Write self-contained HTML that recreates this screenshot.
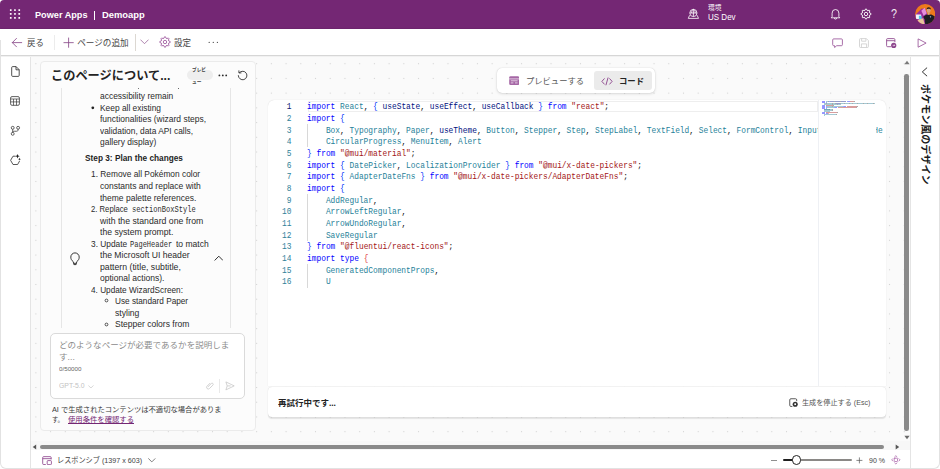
<!DOCTYPE html>
<html lang="ja">
<head>
<meta charset="utf-8">
<title>Power Apps | Demoapp</title>
<style>
*{box-sizing:border-box;margin:0;padding:0}
html,body{width:940px;height:469px;overflow:hidden;background:#fff}
body{font-family:"Liberation Sans","Noto Sans CJK JP",sans-serif;color:#242424;position:relative;font-size:9px}
.abs,.t,svg.ic{position:absolute}
.t{white-space:nowrap;transform-origin:0 50%;overflow:visible}
i{font-style:normal}
#hdr{left:0;top:0;width:940px;height:28.5px;background:#742774;border-radius:4px 4px 0 0}
#tb{left:0;top:28.500px;width:940px;height:27.600px;background:#fff;border-bottom:1px solid #d6d6d6;box-shadow:0 0 1.500px rgba(0,0,0,.22)}
.sep{position:absolute;width:1px;background:#d6d6d6}
#main{left:30.500px;top:56.500px;width:879.500px;height:395px;background-color:#fafafa;
 background-image:radial-gradient(circle,#d2d2d2 0.55px,rgba(210,210,210,0) 1px);background-size:14.730px 14.730px;background-position:-2.500px -0.670px}
#rail{left:0;top:56.5px;width:30.5px;height:412.5px;background:#fff;border-right:1px solid #e4e4e4;border-radius:0 0 0 5px}
#rrail{left:909.600px;top:56.500px;width:30.400px;height:412.5px;background:#fff;border-left:1px solid #e4e4e4}
#chat{left:39.800px;top:60.700px;width:216.400px;height:370.800px;background:#fcfcfc;border-radius:4px;border:1px solid #ebebeb}
#msg{left:60.500px;top:88px;width:170px;height:240px;background:transparent;border-left:1px solid #e6e6e6;border-right:1px solid #e6e6e6}
#inp{left:50.3px;top:333.3px;width:194.4px;height:65.4px;background:#fff;border:1px solid #dadada;border-radius:5px}
#badge{left:186.800px;top:70.200px;width:26.200px;height:9.600px;border-radius:5px;background:#eeeeee}
#tog{left:497.4px;top:68.3px;width:157.8px;height:25px;background:#fff;border-radius:5px;box-shadow:0 0 1px rgba(0,0,0,.2),0 1px 3px rgba(0,0,0,.12)}
#togsel{left:593.8px;top:71px;width:58.5px;height:19px;background:#ebebeb;border-radius:3px}
#code{left:267.8px;top:100.3px;width:617.8px;height:286px;background:#fff;border-radius:6px 6px 0 0;box-shadow:0 0 1px rgba(0,0,0,.18);overflow:hidden}
#codein{position:absolute;left:-267.8px;top:-100.3px;width:940px;height:469px}
.ln{position:absolute;left:268px;width:23.500px;text-align:right;font-family:"Liberation Mono",monospace;font-size:8.300px;line-height:12px;color:#2f8199;white-space:pre;transform:scaleX(.9476);transform-origin:100% 50%}
.ln.a{color:#0b216f}
.cl{position:absolute;left:307.400px;font-family:"Liberation Mono",monospace;font-size:8.300px;line-height:12px;white-space:pre;color:#111;transform:scaleX(.9476);transform-origin:0 50%}
.k{color:#0000ff}.s{color:#a31515}.v{color:#267f99}.f{color:#001080}.b{color:#0431fa}.r{color:#e03c3c}
#curline{left:307.500px;top:101px;width:510px;height:11px;border:1px solid #eeeeee}
#mini{left:817.600px;top:100.300px;width:58.800px;height:286px;background:#fff;border-left:1px solid #eef0f4}
#mm b{position:absolute;height:1px;opacity:.42}
#stat{left:267.8px;top:386.8px;width:617.8px;height:30.5px;background:#fff;border-radius:4px;box-shadow:0 0 1px rgba(0,0,0,.18),0 1.200px 1px rgba(0,0,0,.09)}
#foot{left:30.500px;top:450.300px;width:880px;height:18.700px;background:#fff}
#hsb{left:30.500px;top:440.500px;width:880px;height:9.500px;background:#f7f7f7}
#hth{left:39.5px;top:445px;width:844.5px;height:4.4px;border-radius:2.2px;background:#8a8a8a}
#vsb{left:903.200px;top:56.500px;width:7.300px;height:386px;background:transparent}
#vth{left:904.2px;top:74px;width:4.4px;height:357px;border-radius:2.2px;background:#8a8a8a}
.vt{position:absolute;left:874.600px;top:127.300px;width:100px;height:14px;text-align:center;transform:rotate(90deg);transform-origin:50% 50%;font-weight:bold;font-size:10.050px;line-height:14px;color:#1b1b1b;white-space:nowrap}
</style>
</head>
<body>
<div id="hdr" class="abs"></div>
<div id="tb" class="abs"></div>
<div id="rail" class="abs"></div>
<div id="main" class="abs"></div>
<div id="hsb" class="abs"></div>
<div id="hth" class="abs"></div>
<div id="vsb" class="abs"></div>
<div id="vth" class="abs"></div>
<div id="foot" class="abs"></div>
<div id="rrail" class="abs"></div>
<div id="chat" class="abs"></div>
<div id="msg" class="abs"></div>
<div id="inp" class="abs"></div>
<div id="badge" class="abs"></div>
<div id="tog" class="abs"></div>
<div id="togsel" class="abs"></div>
<div id="code" class="abs"><div id="codein">
<div id="curline" class="abs"></div>
<div class="abs" style="left:307.300px;top:123.500px;width:1px;height:23.5px;background:#d8d8d8"></div>
<div class="abs" style="left:307.300px;top:193.800px;width:1px;height:47px;background:#d8d8d8"></div>
<div class="abs" style="left:307.300px;top:264px;width:1px;height:23.5px;background:#d8d8d8"></div>
<div class="ln a" style="top:101.2px">1</div><div class="cl" style="top:101.2px"><i class="k">import</i> <i class="v">React</i>, <i class="b">{</i> <i class="f">useState</i>, <i class="f">useEffect</i>, <i class="f">useCallback</i> <i class="b">}</i> <i class="k">from</i> <i class="s">"react"</i>;</div>
<div class="ln" style="top:112.9px">2</div><div class="cl" style="top:112.9px"><i class="k">import</i> <i class="b">{</i></div>
<div class="ln" style="top:124.5px">3</div><div class="cl" style="top:124.5px">    <i class="v">Box</i>, <i class="v">Typography</i>, <i class="v">Paper</i>, <i class="f">useTheme</i>, <i class="v">Button</i>, <i class="v">Stepper</i>, <i class="v">Step</i>, <i class="v">StepLabel</i>, <i class="v">TextField</i>, <i class="v">Select</i>, <i class="v">FormControl</i>, <i class="v">InputLabel</i>, <i class="v">FormHe</i></div>
<div class="ln" style="top:136.2px">4</div><div class="cl" style="top:136.2px">    <i class="v">CircularProgress</i>, <i class="v">MenuItem</i>, <i class="v">Alert</i></div>
<div class="ln" style="top:147.9px">5</div><div class="cl" style="top:147.9px"><i class="b">}</i> <i class="k">from</i> <i class="s">"@mui/material"</i>;</div>
<div class="ln" style="top:159.6px">6</div><div class="cl" style="top:159.6px"><i class="k">import</i> <i class="b">{</i> <i class="v">DatePicker</i>, <i class="v">LocalizationProvider</i> <i class="b">}</i> <i class="k">from</i> <i class="s">"@mui/x-date-pickers"</i>;</div>
<div class="ln" style="top:171.2px">7</div><div class="cl" style="top:171.2px"><i class="k">import</i> <i class="b">{</i> <i class="v">AdapterDateFns</i> <i class="b">}</i> <i class="k">from</i> <i class="s">"@mui/x-date-pickers/AdapterDateFns"</i>;</div>
<div class="ln" style="top:182.9px">8</div><div class="cl" style="top:182.9px"><i class="k">import</i> <i class="b">{</i></div>
<div class="ln" style="top:194.6px">9</div><div class="cl" style="top:194.6px">    <i class="v">AddRegular</i>,</div>
<div class="ln" style="top:206.2px">10</div><div class="cl" style="top:206.2px">    <i class="v">ArrowLeftRegular</i>,</div>
<div class="ln" style="top:217.9px">11</div><div class="cl" style="top:217.9px">    <i class="v">ArrowUndoRegular</i>,</div>
<div class="ln" style="top:229.6px">12</div><div class="cl" style="top:229.6px">    <i class="v">SaveRegular</i></div>
<div class="ln" style="top:241.2px">13</div><div class="cl" style="top:241.2px"><i class="b">}</i> <i class="k">from</i> <i class="s">"@fluentui/react-icons"</i>;</div>
<div class="ln" style="top:252.9px">14</div><div class="cl" style="top:252.9px"><i class="k">import</i> <i class="k">type</i> <i class="r">{</i></div>
<div class="ln" style="top:264.6px">15</div><div class="cl" style="top:264.6px">    <i class="v">GeneratedComponentProps</i>,</div>
<div class="ln" style="top:276.2px">16</div><div class="cl" style="top:276.2px">    <i class="v">U</i></div>

<div id="mini" class="abs"></div>
<div id="mm"><b style="left:822.2px;top:100.90px;width:3.0px;background:#0000ff"></b><b style="left:825.7px;top:100.90px;width:2.5px;background:#267f99"></b><b style="left:828.2px;top:100.90px;width:0.5px;background:#333"></b><b style="left:829.2px;top:100.90px;width:0.5px;background:#0431fa"></b><b style="left:830.2px;top:100.90px;width:4.0px;background:#001080"></b><b style="left:834.2px;top:100.90px;width:0.5px;background:#333"></b><b style="left:835.2px;top:100.90px;width:4.5px;background:#001080"></b><b style="left:839.7px;top:100.90px;width:0.5px;background:#333"></b><b style="left:840.7px;top:100.90px;width:5.5px;background:#001080"></b><b style="left:846.7px;top:100.90px;width:0.5px;background:#0431fa"></b><b style="left:847.7px;top:100.90px;width:2.0px;background:#0000ff"></b><b style="left:850.2px;top:100.90px;width:3.5px;background:#a31515"></b><b style="left:853.7px;top:100.90px;width:0.5px;background:#333"></b><b style="left:822.2px;top:101.85px;width:3.0px;background:#0000ff"></b><b style="left:825.7px;top:101.85px;width:0.5px;background:#0431fa"></b><b style="left:824.2px;top:102.80px;width:1.5px;background:#267f99"></b><b style="left:825.7px;top:102.80px;width:0.5px;background:#333"></b><b style="left:826.7px;top:102.80px;width:5.0px;background:#267f99"></b><b style="left:831.7px;top:102.80px;width:0.5px;background:#333"></b><b style="left:832.7px;top:102.80px;width:2.5px;background:#267f99"></b><b style="left:835.2px;top:102.80px;width:0.5px;background:#333"></b><b style="left:836.2px;top:102.80px;width:4.0px;background:#001080"></b><b style="left:840.2px;top:102.80px;width:0.5px;background:#333"></b><b style="left:841.2px;top:102.80px;width:3.0px;background:#267f99"></b><b style="left:844.2px;top:102.80px;width:0.5px;background:#333"></b><b style="left:845.2px;top:102.80px;width:3.5px;background:#267f99"></b><b style="left:848.7px;top:102.80px;width:0.5px;background:#333"></b><b style="left:849.7px;top:102.80px;width:2.0px;background:#267f99"></b><b style="left:851.7px;top:102.80px;width:0.5px;background:#333"></b><b style="left:852.7px;top:102.80px;width:4.5px;background:#267f99"></b><b style="left:857.2px;top:102.80px;width:0.5px;background:#333"></b><b style="left:858.2px;top:102.80px;width:4.5px;background:#267f99"></b><b style="left:862.7px;top:102.80px;width:0.5px;background:#333"></b><b style="left:863.7px;top:102.80px;width:3.0px;background:#267f99"></b><b style="left:866.7px;top:102.80px;width:0.5px;background:#333"></b><b style="left:867.7px;top:102.80px;width:5.5px;background:#267f99"></b><b style="left:873.2px;top:102.80px;width:0.5px;background:#333"></b><b style="left:874.2px;top:102.80px;width:1.3px;background:#267f99"></b><b style="left:824.2px;top:103.75px;width:8.0px;background:#267f99"></b><b style="left:832.2px;top:103.75px;width:0.5px;background:#333"></b><b style="left:833.2px;top:103.75px;width:4.0px;background:#267f99"></b><b style="left:837.2px;top:103.75px;width:0.5px;background:#333"></b><b style="left:838.2px;top:103.75px;width:2.5px;background:#267f99"></b><b style="left:822.2px;top:104.70px;width:0.5px;background:#0431fa"></b><b style="left:823.2px;top:104.70px;width:2.0px;background:#0000ff"></b><b style="left:825.7px;top:104.70px;width:7.5px;background:#a31515"></b><b style="left:833.2px;top:104.70px;width:0.5px;background:#333"></b><b style="left:822.2px;top:105.65px;width:3.0px;background:#0000ff"></b><b style="left:825.7px;top:105.65px;width:0.5px;background:#0431fa"></b><b style="left:826.7px;top:105.65px;width:5.0px;background:#267f99"></b><b style="left:831.7px;top:105.65px;width:0.5px;background:#333"></b><b style="left:832.7px;top:105.65px;width:10.0px;background:#267f99"></b><b style="left:843.2px;top:105.65px;width:0.5px;background:#0431fa"></b><b style="left:844.2px;top:105.65px;width:2.0px;background:#0000ff"></b><b style="left:846.7px;top:105.65px;width:10.5px;background:#a31515"></b><b style="left:857.2px;top:105.65px;width:0.5px;background:#333"></b><b style="left:822.2px;top:106.60px;width:3.0px;background:#0000ff"></b><b style="left:825.7px;top:106.60px;width:0.5px;background:#0431fa"></b><b style="left:826.7px;top:106.60px;width:7.0px;background:#267f99"></b><b style="left:834.2px;top:106.60px;width:0.5px;background:#0431fa"></b><b style="left:835.2px;top:106.60px;width:2.0px;background:#0000ff"></b><b style="left:837.7px;top:106.60px;width:18.0px;background:#a31515"></b><b style="left:855.7px;top:106.60px;width:0.5px;background:#333"></b><b style="left:822.2px;top:107.55px;width:3.0px;background:#0000ff"></b><b style="left:825.7px;top:107.55px;width:0.5px;background:#0431fa"></b><b style="left:824.2px;top:108.50px;width:5.0px;background:#267f99"></b><b style="left:829.2px;top:108.50px;width:0.5px;background:#333"></b><b style="left:824.2px;top:109.45px;width:8.0px;background:#267f99"></b><b style="left:832.2px;top:109.45px;width:0.5px;background:#333"></b><b style="left:824.2px;top:110.40px;width:8.0px;background:#267f99"></b><b style="left:832.2px;top:110.40px;width:0.5px;background:#333"></b><b style="left:824.2px;top:111.35px;width:5.5px;background:#267f99"></b><b style="left:822.2px;top:112.30px;width:0.5px;background:#0431fa"></b><b style="left:823.2px;top:112.30px;width:2.0px;background:#0000ff"></b><b style="left:825.7px;top:112.30px;width:11.5px;background:#a31515"></b><b style="left:837.2px;top:112.30px;width:0.5px;background:#333"></b><b style="left:822.2px;top:113.25px;width:3.0px;background:#0000ff"></b><b style="left:825.7px;top:113.25px;width:2.0px;background:#0000ff"></b><b style="left:828.2px;top:113.25px;width:0.5px;background:#e03c3c"></b><b style="left:824.2px;top:114.20px;width:11.5px;background:#267f99"></b><b style="left:835.7px;top:114.20px;width:0.5px;background:#333"></b><b style="left:824.2px;top:115.15px;width:0.5px;background:#267f99"></b></div>
</div></div>
<div id="stat" class="abs"></div>
<div class="sep" style="left:54px;top:35px;height:15px;background:#ececec"></div>
<div class="sep" style="left:134.500px;top:33.500px;height:17px;background:#dcd8d2"></div>
<div class="sep" style="left:218.800px;top:379px;height:14px;background:#e9e9e9"></div>
<div class="abs" style="left:94px;top:11px;width:1px;height:9.400px;background:#fff"></div>
<div class="t" style="left:891.300px;top:7.100px;font-size:13.500px;line-height:14px;color:#fff;transform:scaleX(.8);opacity:.92">?</div>
<div class="abs" style="left:137.600px;top:88px;width:.9px;height:.8px;background:#777"></div><div class="abs" style="left:177.600px;top:88px;width:.9px;height:1.200px;background:#666"></div>
<!-- waffle -->
<svg class="ic" style="left:9px;top:8px" width="13" height="13" viewBox="0 0 13 13"><g fill="#fff">
<rect x="0.9" y="1.2" width="1.700" height="1.700" rx=".3"/><rect x="5.1" y="1.2" width="1.700" height="1.700" rx=".3"/><rect x="9.4" y="1.2" width="1.700" height="1.700" rx=".3"/>
<rect x="0.9" y="5.1" width="1.700" height="1.700" rx=".3"/><rect x="5.1" y="5.1" width="1.700" height="1.700" rx=".3"/><rect x="9.4" y="5.1" width="1.700" height="1.700" rx=".3"/>
<rect x="0.9" y="9" width="1.700" height="1.700" rx=".3"/><rect x="5.1" y="9" width="1.700" height="1.700" rx=".3"/><rect x="9.4" y="9" width="1.700" height="1.700" rx=".3"/></g></svg>
<!-- env icon -->
<svg class="ic" style="left:687px;top:8px" width="13" height="12" viewBox="0 0 13 12" fill="none" stroke="#fff" stroke-width=".8"><ellipse cx="6.4" cy="5" rx="3.6" ry="3.6"/><path d="M2.8 5h7.2M6.4 1.4v7.2M4.6 5c0-2 .8-3.6 1.8-3.6S8.200 3 8.200 5"/><path d="M2.600 7.300 1.300 10.400h10.200L10.200 7.300M1.300 10.400"/></svg>
<!-- bell -->
<svg class="ic" style="left:829px;top:8px" width="13" height="13" viewBox="0 0 13 13" fill="none" stroke="#fff" stroke-width=".85" stroke-linejoin="round"><path d="M3.100 8.700V5.200a3.400 3.700 0 0 1 6.800 0v3.500l.9 1.100H2.200z"/><path d="M5.300 9.900a1.200 1.200 0 0 0 2.400 0"/></svg>
<!-- gear hdr -->
<svg class="ic" style="left:859.900px;top:8px" width="12" height="12" viewBox="0 0 12 12" fill="none" stroke="#fff" stroke-width=".9" stroke-linejoin="round"><circle cx="6" cy="6" r="1.700"/><path d="M10.97 5.48L10.97 6.52L9.67 7.00L9.30 7.89L9.89 9.15L9.15 9.89L7.89 9.30L7.00 9.67L6.52 10.97L5.48 10.97L5.00 9.67L4.11 9.30L2.85 9.89L2.11 9.15L2.70 7.89L2.33 7.00L1.03 6.52L1.03 5.48L2.33 5.00L2.70 4.11L2.11 2.85L2.85 2.11L4.11 2.70L5.00 2.33L5.48 1.03L6.52 1.03L7.00 2.33L7.89 2.70L9.15 2.11L9.89 2.85L9.30 4.11L9.67 5.00z"/></svg>
<!-- avatar -->
<svg class="ic" style="left:914.700px;top:4px" width="20.400" height="20.400" viewBox="0 0 20 20"><defs><clipPath id="av"><circle cx="10" cy="10" r="9.900"/></clipPath></defs><g clip-path="url(#av)"><rect width="20" height="20" fill="#ee7a1c"/><path d="M0 11 6.500 4.500 10 5l3 7-3 8.500H2z" fill="#9b2e9b"/><path d="M6.200 6.500 9.500 3.800l2 5.200-3 2.500z" fill="#e38fdc"/><path d="M.8 10.300h5.200v4.500H.8z" fill="#f2f6fa"/><path d="M3.800 11.500h2.700v4H3.800z" fill="#55c4ea"/><path d="M2.500 15.800 8 14l1.500 6H5z" fill="#e8c39a"/><path d="M8 12.600l3-2.100 5-.3 3.200 1.800.5 8.500H10l-.5-5.200z" fill="#1c1c22"/><path d="M12.600 8h1.700v2.600h-1.700z" fill="#d6a27e"/><ellipse cx="13.400" cy="6.300" rx="1.900" ry="2.400" fill="#d6a27e"/><path d="M11.200 5.600c.1-3.200 4.400-3.200 4.500 0-.8-1.100-3.600-1.200-4.500 0z" fill="#1b1b1b"/><circle cx="15.200" cy="12.600" r=".7" fill="#9fd0ee"/></g></svg>
<!-- back arrow -->
<svg class="ic" style="left:11px;top:37px" width="12" height="11" viewBox="0 0 12 11" fill="none" stroke="#8a4a8a" stroke-width=".85" stroke-linecap="round" stroke-linejoin="round"><path d="M10.700 5.600H1.400M5.500 1.400 1.300 5.600l4.200 4.200"/></svg>
<!-- plus -->
<svg class="ic" style="left:62.500px;top:37px" width="11" height="11" viewBox="0 0 11 11" fill="none" stroke="#8a4a8a" stroke-width=".85" stroke-linecap="round"><path d="M5.600 1v9.300M.9 5.650h9.400"/></svg>
<!-- chevron down tb -->
<svg class="ic" style="left:140px;top:39px" width="9" height="6" viewBox="0 0 9 6" fill="none" stroke="#9a669a" stroke-width=".8" stroke-linecap="round" stroke-linejoin="round"><path d="M.7.900l3.800 3.800L8.300.9"/></svg>
<!-- gear tb -->
<svg class="ic" style="left:159px;top:36.300px" width="12" height="12" viewBox="0 0 12 12" fill="none" stroke="#a35fa3" stroke-width=".9" stroke-linejoin="round"><circle cx="6" cy="6" r="1.700"/><path d="M11.17 5.46L11.17 6.54L9.76 7.02L9.38 7.94L10.04 9.27L9.27 10.04L7.94 9.38L7.02 9.76L6.54 11.17L5.46 11.17L4.98 9.76L4.06 9.38L2.73 10.04L1.96 9.27L2.62 7.94L2.24 7.02L0.83 6.54L0.83 5.46L2.24 4.98L2.62 4.06L1.96 2.73L2.73 1.96L4.06 2.62L4.98 2.24L5.46 0.83L6.54 0.83L7.02 2.24L7.94 2.62L9.27 1.96L10.04 2.73L9.38 4.06L9.76 4.98z"/></svg>
<!-- dots tb -->
<svg class="ic" style="left:208px;top:41px" width="11" height="3" viewBox="0 0 11 3" fill="#555"><circle cx="1.200" cy="1.400" r=".65"/><circle cx="5.300" cy="1.400" r=".65"/><circle cx="9.400" cy="1.400" r=".65"/></svg>
<!-- comment -->
<svg class="ic" style="left:831.500px;top:37.500px" width="11" height="11" viewBox="0 0 11 11" fill="none" stroke="#9a559a" stroke-width=".85" stroke-linejoin="round"><path d="M1.700.9h7.700a1 1 0 0 1 1 1v4.800a1 1 0 0 1-1 1H4.700L2.600 9.500V7.700H1.700a1 1 0 0 1-1-1V1.900a1 1 0 0 1 1-1z"/></svg>
<!-- save -->
<svg class="ic" style="left:859.300px;top:37.700px" width="10" height="10" viewBox="0 0 10 10" fill="none" stroke="#cfcfcf" stroke-width=".85" stroke-linejoin="round"><path d="M1.500.6h5.900l2 2v5.900a1 1 0 0 1-1 1H1.500a1 1 0 0 1-1-1V1.600a1 1 0 0 1 1-1z"/><path d="M2.600.6v2.600h4.300V.6M2.400 9.400V5.900h5.200v3.500"/></svg>
<!-- calendar -->
<svg class="ic" style="left:886.200px;top:37.700px" width="11" height="11" viewBox="0 0 11 11" fill="none" stroke="#8d458d" stroke-width=".85" stroke-linejoin="round"><path d="M5 8.700H1.600a1 1 0 0 1-1-1V1.600a1 1 0 0 1 1-1h6.300a1 1 0 0 1 1 1V4.200M.6 2.700h8.300"/><circle cx="7.700" cy="7.400" r="2.600" fill="#8d458d" stroke="none"/><path d="M6.700 7.400h2M7.900 6.500l.9.900-.9.900" stroke="#fff" stroke-width=".6"/></svg>
<!-- play -->
<svg class="ic" style="left:916.500px;top:37.500px" width="10" height="10" viewBox="0 0 10 10" fill="none" stroke="#9a559a" stroke-width=".85" stroke-linejoin="round"><path d="M1.100.9v8.300l8-4.150z"/></svg>
<!-- rail icons -->
<svg class="ic" style="left:11px;top:66.300px" width="9" height="11" viewBox="0 0 9 11" fill="none" stroke="#333" stroke-width=".85" stroke-linejoin="round"><path d="M1.700.6h3.400l3.100 3.100v5.700a1 1 0 0 1-1 1H1.700a1 1 0 0 1-1-1V1.600a1 1 0 0 1 1-1z"/><path d="M5 .7v3.100h3.100"/></svg>
<svg class="ic" style="left:10.300px;top:96.400px" width="10" height="10" viewBox="0 0 10 10" fill="none" stroke="#3a3a3a" stroke-width=".8" stroke-linejoin="round"><rect x=".6" y=".6" width="8.800" height="8.700" rx="1.400"/><path d="M.6 3h8.800M.6 5.900h8.800M3.500 3v6.300M6.500 3v6.300" stroke-width=".7"/></svg>
<svg class="ic" style="left:10px;top:125px" width="11" height="11" viewBox="0 0 11 11" fill="none" stroke="#3a3a3a" stroke-width=".8"><circle cx="2.700" cy="2.800" r="1.450"/><circle cx="8.100" cy="2.800" r="1.450"/><circle cx="2.700" cy="8.800" r="1.450"/><path d="M2.700 4.250v3.100M8.100 4.250v.5c0 1-.6 1.500-1.600 1.500H4.500c-1 0-1.800.4-1.800 1.100"/></svg>
<svg class="ic" style="left:10px;top:153px" width="12" height="13" viewBox="0 0 12 13" fill="none" stroke="#3a3a3a" stroke-width=".85" stroke-linejoin="round"><path d="M5.600 3.200H3L.6 7.300 3 11.500h4.600l2-3.500"/><path d="M7.500.9l.65 1.600 1.600.65-1.600.65-.65 1.600-.65-1.600-1.600-.65 1.600-.65z" fill="#222" stroke="none"/><path d="M9.500 4.700l.42 1.050 1.050.42-1.050.42L9.500 7.640l-.42-1.050-1.050-.42 1.050-.42z" fill="#222" stroke="none"/></svg>
<!-- chat hdr dots -->
<svg class="ic" style="left:218px;top:73.800px" width="10" height="3" viewBox="0 0 10 3" fill="#2a2a2a"><circle cx="1.400" cy="1.400" r=".9"/><circle cx="4.800" cy="1.400" r=".9"/><circle cx="8.200" cy="1.400" r=".9"/></svg>
<!-- refresh -->
<svg class="ic" style="left:237px;top:69.500px" width="11" height="11" viewBox="0 0 11 11" fill="none" stroke="#333" stroke-width=".9" stroke-linecap="round" stroke-linejoin="round"><path d="M2.400 2.600A4.300 4.300 0 1 1 1.300 5.600"/><path d="M1.900.8v2.100h2.100"/></svg>
<!-- bulb -->
<svg class="ic" style="left:70px;top:252px" width="10" height="14" viewBox="0 0 10 14" fill="none" stroke="#222" stroke-width=".9" stroke-linejoin="round"><path d="M3.200 9.600C1.600 8.400.8 7 .8 5.100a4.200 4.200 0 0 1 8.400 0c0 1.900-.8 3.300-2.400 4.500l-.4 1.700H3.600z"/><path d="M3.600 11.300l.3 1.300h2.200l.3-1.300" /></svg>
<!-- chevron up -->
<svg class="ic" style="left:213.500px;top:254.500px" width="9" height="6" viewBox="0 0 9 6" fill="none" stroke="#333" stroke-width="1" stroke-linecap="round" stroke-linejoin="round"><path d="M.9 5.200l3.900-4L8.700 5.200"/></svg>
<!-- bullets -->
<svg class="ic" style="left:90.500px;top:106px" width="4" height="4"><circle cx="1.800" cy="1.800" r="1.400" fill="#222"/></svg>
<svg class="ic" style="left:104px;top:298.400px" width="5" height="5"><circle cx="2.500" cy="2.500" r="1.400" fill="none" stroke="#2a2a2a" stroke-width=".8"/></svg>
<svg class="ic" style="left:104px;top:321.600px" width="5" height="5"><circle cx="2.500" cy="2.500" r="1.400" fill="none" stroke="#2a2a2a" stroke-width=".8"/></svg>
<!-- gpt chevron -->
<svg class="ic" style="left:87.500px;top:385px" width="6" height="4" viewBox="0 0 6 4" fill="none" stroke="#c6c6c6" stroke-width=".7" stroke-linecap="round"><path d="M.6.700l2.300 2.300L5.200.7"/></svg>
<!-- paperclip -->
<svg class="ic" style="left:204.600px;top:380.600px" width="10" height="10" viewBox="0 0 10 10" fill="none" stroke="#c8c8c8" stroke-width=".8" stroke-linecap="round"><path d="M4.900 2.300 2 5.200a1.700 1.700 0 0 0 2.400 2.400l3.500-3.500a1.100 1.100 0 0 0-1.600-1.600L3.100 5.700"/></svg>
<!-- send -->
<svg class="ic" style="left:224.500px;top:380.900px" width="10" height="10" viewBox="0 0 10 10" fill="none" stroke="#c8c8c8" stroke-width=".8" stroke-linejoin="round"><path d="M.9.900l8.300 4-8.300 4 1.300-4zM2.200 4.900h3.500"/></svg>
<!-- toggle: preview icon -->
<svg class="ic" style="left:508.800px;top:76px" width="10.500" height="9.500" viewBox="0 0 10.500 9.500"><rect x=".2" y=".2" width="10" height="8.900" rx="1.400" fill="#a567a5"/><path d="M.2 2.900h10M1.800 4.800h6.800M1.800 6.900h2.600M6 6.900h2.600" stroke="#f3e6f3" stroke-width=".8" fill="none"/></svg>
<!-- toggle: code icon -->
<svg class="ic" style="left:601.300px;top:77px" width="12" height="9" viewBox="0 0 12 9" fill="none" stroke="#8a3f8a" stroke-width=".9" stroke-linecap="round" stroke-linejoin="round"><path d="M3.300 1.700.9 4.400l2.400 2.700M8.700 1.700l2.400 2.700-2.400 2.700M7 .9 5 7.900"/></svg>
<!-- stop icon -->
<svg class="ic" style="left:788.500px;top:398px" width="9.400" height="9.400" viewBox="0 0 10 10" fill="none" stroke="#333" stroke-width=".85" stroke-linejoin="round"><path d="M3.600 9H2a1.200 1.200 0 0 1-1.200-1.200V2A1.200 1.200 0 0 1 2 .8h5A1.200 1.200 0 0 1 8.200 2v1.400"/><circle cx="6.600" cy="6.600" r="2.700" fill="#333" stroke="none"/><rect x="5.700" y="5.700" width="1.800" height="1.800" fill="#fff" stroke="none"/></svg>
<!-- footer responsive icon -->
<svg class="ic" style="left:42.400px;top:455.900px" width="10" height="9.200" viewBox="0 0 10 10" preserveAspectRatio="none" fill="none" stroke="#8a3f8a" stroke-width=".85" stroke-linejoin="round"><path d="M3.800 9.300H1.700a1 1 0 0 1-1-1V1.700a1 1 0 0 1 1-1h6.500a1 1 0 0 1 1 1v2M.7 2.900h8.500"/><rect x="5.200" y="5" width="4.200" height="4.400" rx=".8"/></svg>
<svg class="ic" style="left:147.500px;top:458px" width="8" height="5" viewBox="0 0 8 5" fill="none" stroke="#555" stroke-width=".75" stroke-linecap="round" stroke-linejoin="round"><path d="M.6.700l3.200 3.200L7 .7"/></svg>
<!-- zoom slider -->
<div class="abs" style="left:771.300px;top:459.600px;width:5.800px;height:.9px;background:#8f8f8f"></div>
<div class="abs" style="left:783px;top:459px;width:13px;height:2.200px;background:#1f1f1f;border-radius:1px"></div>
<div class="abs" style="left:796px;top:459.300px;width:55.500px;height:1.700px;background:#8a8886;border-radius:1px"></div>
<div class="abs" style="left:791.600px;top:455.300px;width:9.500px;height:9.500px;border-radius:50%;background:#fff;border:.9px solid #222"></div>
<svg class="ic" style="left:856.200px;top:456.700px" width="7" height="7" viewBox="0 0 7 7" stroke="#555" stroke-width=".7"><path d="M3.400.4v6M.4 3.400h6"/></svg>
<!-- fit icon -->
<svg class="ic" style="left:891.200px;top:454.700px" width="10" height="10" viewBox="0 0 10 10" fill="none" stroke="#a860a8" stroke-width=".75" stroke-linecap="round" stroke-linejoin="round"><rect x="3.200" y="3.200" width="3.300" height="3.300" rx=".6"/><path d="M3.700 1.800 4.850.7 6 1.800M3.700 7.900 4.850 9 6 7.900M1.800 3.700.7 4.850 1.800 6M7.900 3.700 9 4.850 7.900 6"/></svg>
<!-- scroll arrows -->
<svg class="ic" style="left:903.500px;top:60px" width="6" height="5" viewBox="0 0 6 5"><path d="M.4 4.200 3 .7l2.600 3.500z" fill="#7a7a7a"/></svg>
<svg class="ic" style="left:903.500px;top:435.300px" width="6" height="5" viewBox="0 0 6 5"><path d="M.4.700 3 4.200 5.600.7z" fill="#6a6a6a"/></svg>
<svg class="ic" style="left:32px;top:444.300px" width="5" height="6" viewBox="0 0 5 6"><path d="M4.200.4.700 3l3.500 2.600z" fill="#555"/></svg>
<svg class="ic" style="left:894.500px;top:444.300px" width="5" height="6" viewBox="0 0 5 6"><path d="M.7.400 4.200 3 .7 5.600z" fill="#555"/></svg>
<!-- right rail chevron -->
<svg class="ic" style="left:921px;top:66.500px" width="7" height="10" viewBox="0 0 7 10" fill="none" stroke="#333" stroke-width="1" stroke-linecap="round" stroke-linejoin="round"><path d="M5.800.9 1.300 4.900l4.500 4"/></svg>

<div class="abs" style="left:0;top:40px;width:940px;height:429px;border:1px solid #e2e2e2;border-top:none;border-radius:0 0 6px 6px"></div>
<div class="vt">ポケモン風のデザイン</div>
<div class="t" style="left:35.0px;top:8.6px;font-size:9px;line-height:12px;height:12px;color:#fff;transform:scaleX(1.016);font-weight:bold;">Power Apps</div>
<div class="t" style="left:101.7px;top:8.6px;font-size:9px;line-height:12px;height:12px;color:#fff;transform:scaleX(1.044);font-weight:bold;">Demoapp</div>
<div class="t" style="left:708.3px;top:2.0px;font-size:6.6px;line-height:12px;height:12px;color:#fff;transform:scaleX(1.016);">環境</div>
<div class="t" style="left:708.0px;top:11.2px;font-size:9px;line-height:12px;height:12px;color:#fff;transform:scaleX(0.890);">US Dev</div>
<div class="t" style="left:26.8px;top:37.2px;font-size:8.6px;line-height:12px;height:12px;color:#454545;transform:scaleX(0.977);">戻る</div>
<div class="t" style="left:77.2px;top:37.2px;font-size:8.6px;line-height:12px;height:12px;color:#454545;transform:scaleX(1.000);">ページの追加</div>
<div class="t" style="left:174.0px;top:37.0px;font-size:8.6px;line-height:12px;height:12px;color:#454545;transform:scaleX(0.988);">設定</div>
<div class="t" style="left:51.2px;top:70.3px;font-size:12px;line-height:12px;height:12px;color:#242424;transform:scaleX(1.017);font-weight:bold;">このページについて...</div>
<div class="t" style="left:191.5px;top:62.9px;font-size:5.0px;line-height:12px;height:12px;color:#444;transform:scaleX(0.932);font-weight:bold;">プレビ</div>
<div class="t" style="left:191.5px;top:75.4px;font-size:5.0px;line-height:12px;height:12px;color:#444;transform:scaleX(0.939);font-weight:bold;">ュー</div>
<div class="t" style="left:99.8px;top:90.3px;font-size:8.65px;line-height:12px;height:12px;color:#2b2b2b;transform:scaleX(0.979);">accessibility remain</div>
<div class="t" style="left:99.8px;top:101.8px;font-size:8.65px;line-height:12px;height:12px;color:#2b2b2b;transform:scaleX(0.971);">Keep all existing</div>
<div class="t" style="left:99.8px;top:113.2px;font-size:8.65px;line-height:12px;height:12px;color:#2b2b2b;transform:scaleX(0.983);">functionalities (wizard steps,</div>
<div class="t" style="left:99.8px;top:124.6px;font-size:8.65px;line-height:12px;height:12px;color:#2b2b2b;transform:scaleX(0.971);">validation, data API calls,</div>
<div class="t" style="left:99.8px;top:136.1px;font-size:8.65px;line-height:12px;height:12px;color:#2b2b2b;transform:scaleX(0.979);">gallery display)</div>
<div class="t" style="left:85.0px;top:152.4px;font-size:8.6px;line-height:12px;height:12px;color:#1f1f1f;transform:scaleX(0.963);font-weight:bold;">Step 3: Plan the changes</div>
<div class="t" style="left:91.1px;top:168.4px;font-size:8.65px;line-height:12px;height:12px;color:#2b2b2b;transform:scaleX(0.968);">1. Remove all Pokémon color</div>
<div class="t" style="left:99.8px;top:179.9px;font-size:8.65px;line-height:12px;height:12px;color:#2b2b2b;transform:scaleX(0.987);">constants and replace with</div>
<div class="t" style="left:99.8px;top:191.5px;font-size:8.65px;line-height:12px;height:12px;color:#2b2b2b;transform:scaleX(0.984);">theme palette references.</div>
<div class="t" style="left:91.1px;top:203.0px;font-size:8.65px;line-height:12px;height:12px;color:#2b2b2b;transform:scaleX(0.892);">2. Replace</div>
<div class="t" style="left:131.7px;top:204.0px;font-size:9.2px;line-height:12px;height:12px;color:#2b2b2b;transform:scaleX(0.770);font-family:'Liberation Mono',monospace;">sectionBoxStyle</div>
<div class="t" style="left:99.8px;top:214.5px;font-size:8.65px;line-height:12px;height:12px;color:#2b2b2b;transform:scaleX(1.011);">with the standard one from</div>
<div class="t" style="left:99.8px;top:226.1px;font-size:8.65px;line-height:12px;height:12px;color:#2b2b2b;transform:scaleX(1.001);">the system prompt.</div>
<div class="t" style="left:91.1px;top:237.6px;font-size:8.65px;line-height:12px;height:12px;color:#2b2b2b;transform:scaleX(0.965);">3. Update</div>
<div class="t" style="left:130.0px;top:238.6px;font-size:9.2px;line-height:12px;height:12px;color:#2b2b2b;transform:scaleX(0.764);font-family:'Liberation Mono',monospace;">PageHeader</div>
<div class="t" style="left:175.6px;top:237.6px;font-size:8.65px;line-height:12px;height:12px;color:#2b2b2b;transform:scaleX(0.989);">to match</div>
<div class="t" style="left:99.8px;top:249.1px;font-size:8.65px;line-height:12px;height:12px;color:#2b2b2b;transform:scaleX(0.999);">the Microsoft UI header</div>
<div class="t" style="left:99.8px;top:260.6px;font-size:8.65px;line-height:12px;height:12px;color:#2b2b2b;transform:scaleX(1.010);">pattern (title, subtitle,</div>
<div class="t" style="left:99.8px;top:272.2px;font-size:8.65px;line-height:12px;height:12px;color:#2b2b2b;transform:scaleX(0.989);">optional actions).</div>
<div class="t" style="left:91.1px;top:283.7px;font-size:8.65px;line-height:12px;height:12px;color:#2b2b2b;transform:scaleX(0.954);">4. Update WizardScreen:</div>
<div class="t" style="left:114.6px;top:295.2px;font-size:8.65px;line-height:12px;height:12px;color:#2b2b2b;transform:scaleX(0.953);">Use standard Paper</div>
<div class="t" style="left:114.6px;top:306.8px;font-size:8.65px;line-height:12px;height:12px;color:#2b2b2b;transform:scaleX(0.998);">styling</div>
<div class="t" style="left:114.6px;top:318.3px;font-size:8.65px;line-height:12px;height:12px;color:#2b2b2b;transform:scaleX(0.988);">Stepper colors from</div>
<div class="t" style="left:59.2px;top:339.0px;font-size:8.5px;line-height:12px;height:12px;color:#8c8c8c;transform:scaleX(1.003);">どのようなページが必要であるかを説明しま</div>
<div class="t" style="left:59.2px;top:350.6px;font-size:8.5px;line-height:12px;height:12px;color:#8c8c8c;transform:scaleX(1.013);">す...</div>
<div class="t" style="left:58.5px;top:363.4px;font-size:5.8px;line-height:12px;height:12px;color:#666;transform:scaleX(1.073);">0/50000</div>
<div class="t" style="left:59.0px;top:380.3px;font-size:7.6px;line-height:12px;height:12px;color:#c2c2c2;transform:scaleX(0.902);">GPT-5.0</div>
<div class="t" style="left:52.2px;top:404.4px;font-size:7.2px;line-height:12px;height:12px;color:#3a3a3a;transform:scaleX(1.016);">AI で生成されたコンテンツは不適切な場合がありま</div>
<div class="t" style="left:52.2px;top:413.8px;font-size:7.2px;line-height:12px;height:12px;color:#3a3a3a;transform:scaleX(0.864);">す。</div>
<div class="t" style="left:68.0px;top:413.8px;font-size:7.2px;line-height:12px;height:12px;color:#742774;transform:scaleX(1.020);text-decoration:underline;text-underline-offset:1px">使用条件を確認する</div>
<div class="t" style="left:526.0px;top:75.0px;font-size:8.4px;line-height:12px;height:12px;color:#555;transform:scaleX(0.989);">プレビューする</div>
<div class="t" style="left:619.0px;top:75.0px;font-size:8.4px;line-height:12px;height:12px;color:#242424;transform:scaleX(0.995);font-weight:bold;">コード</div>
<div class="t" style="left:277.6px;top:396.7px;font-size:8.4px;line-height:12px;height:12px;color:#242424;transform:scaleX(1.013);font-weight:bold;">再試行中です...</div>
<div class="t" style="left:801.6px;top:396.7px;font-size:7.4px;line-height:12px;height:12px;color:#555;transform:scaleX(0.963);">生成を停止する (Esc)</div>
<div class="t" style="left:57.0px;top:455.4px;font-size:7.8px;line-height:12px;height:12px;color:#444;transform:scaleX(0.917);">レスポンシブ (1397 x 603)</div>
<div class="t" style="left:869.0px;top:454.8px;font-size:7.4px;line-height:12px;height:12px;color:#444;transform:scaleX(0.949);">90 %</div>
</body>
</html>
